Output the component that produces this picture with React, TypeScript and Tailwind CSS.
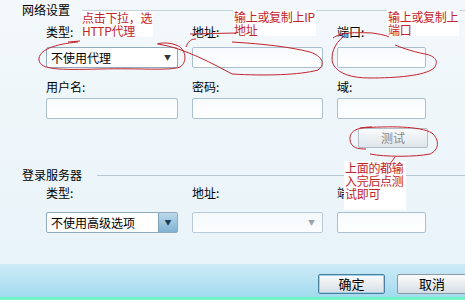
import React from "react";

const font = { fontFamily: '"SimSun", "Noto Sans CJK SC", "Liberation Sans", sans-serif' };

function Input({ className = "" }: { className?: string }) {
  return (
    <div
      className={`h-[21px] rounded-[2px] border border-[#aac0cf] bg-gradient-to-b from-[#f7fafc] to-white ${className}`}
    />
  );
}

function Label({ children }: { children: React.ReactNode }) {
  return <div className="h-[11px] text-[12px] leading-[11px] text-black">{children}</div>;
}

function Note({ lines, className }: { lines: string[]; className: string }) {
  return (
    <div
      className={`absolute whitespace-nowrap bg-white px-[1px] text-[12px] leading-[13px] tracking-[-0.3px] text-[#c3242c] ${className}`}
    >
      {lines.map((l) => (
        <div key={l}>{l}</div>
      ))}
    </div>
  );
}

export default function App() {
  return (
    <div
      className="relative flex h-[300px] w-[465px] flex-col overflow-hidden bg-gradient-to-b from-[#f3f8fb] to-[#e7f3f9]"
      style={font}
    >
      <div className="flex flex-1 flex-col pl-[46px] pt-[3px]">
        {/* 网络设置 */}
        <div className="-ml-[24px] flex h-[14px] items-center gap-[12px]">
          <span className="text-[12px] text-black">网络设置</span>
          <div className="h-px flex-1 bg-[#c5d3dc]" />
        </div>

        <div className="mt-[9px] grid grid-cols-[132px_131px_89px] gap-x-[14px]">
          <Label>类型:</Label>
          <Label>地址:</Label>
          <Label>端口:</Label>
          <div className="col-span-3 h-[10px]" />
          <div className="flex h-[21px] items-center justify-between rounded-[2px] border border-[#8fa9bd] bg-white pl-[4px] pr-[6px] text-[12px]">
            <span>不使用代理</span>
            <span className="text-[7px] text-[#333]">▼</span>
          </div>
          <Input />
          <Input />
          <div className="col-span-3 h-[13px]" />
          <Label>用户名:</Label>
          <Label>密码:</Label>
          <Label>域:</Label>
          <div className="col-span-3 h-[6px]" />
          <Input />
          <Input />
          <Input />
        </div>

        <div className="mt-[9px] flex pl-[312px]">
          <div className="flex h-[20px] w-[70px] items-center justify-center rounded-[2px] border border-[#b4bec6] bg-gradient-to-b from-[#fafbfc] to-[#dfe5ea] text-[12px] text-[#8a8a8a]">
            测试
          </div>
        </div>

        {/* 登录服务器 */}
        <div className="-ml-[24px] mt-[20px] flex h-[14px] items-center gap-[15px]">
          <span className="text-[12px] text-black">登录服务器</span>
          <div className="h-px flex-1 bg-[#b9c7d0]" />
        </div>

        <div className="mt-[5px] grid grid-cols-[132px_131px_89px] gap-x-[14px]">
          <Label>类型:</Label>
          <Label>地址:</Label>
          <Label>端口:</Label>
          <div className="col-span-3 h-[14px]" />
          <div className="flex h-[21px] items-stretch rounded-[2px] border border-[#8fa9bd] bg-white text-[12px]">
            <span className="flex flex-1 items-center pl-[4px]">不使用高级选项</span>
            <span className="flex w-[19px] items-center justify-center border-l border-[#7fa3bd] bg-gradient-to-b from-[#bcdaeb] to-[#7fb2d2] text-[7px] text-[#1d3c55]">
              ▼
            </span>
          </div>
          <div className="flex h-[21px] items-center justify-end rounded-[2px] border border-[#b8cad6] bg-gradient-to-b from-[#f5f9fb] to-[#fafcfd] pr-[7px] text-[7px] text-[#9aa4ab]">
            ▼
          </div>
          <Input />
        </div>
      </div>

      {/* bottom bar */}
      <div className="flex h-[36px] items-start justify-end gap-[12px] border-b-[3px] border-[#6ff4c6] bg-gradient-to-b from-[#cdeaf6] to-[#a2dbf0] pt-[10px]">
        <div className="flex h-[20px] w-[67px] items-center justify-center rounded-[2px] border border-[#4b7f9b] bg-gradient-to-b from-[#fbfcfd] to-[#d6dee4] text-[13px] text-black shadow-[inset_0_0_0_1px_#9fd0e8]">
          确定
        </div>
        <div className="-mr-[2px] flex h-[20px] w-[70px] items-center justify-center rounded-[2px] border border-[#8a9aa6] bg-gradient-to-b from-[#fbfcfd] to-[#d6dee4] text-[13px] text-black">
          取消
        </div>
      </div>

      {/* annotations */}
      <Note lines={["点击下拉，选", "HTTP代理"]} className="left-[81px] top-[11px]" />
      <Note lines={["输上或复制上IP", "地址"]} className="left-[233px] top-[10px]" />
      <Note lines={["输上或复制上", "端口"]} className="left-[387px] top-[10px]" />
      <Note lines={["上面的都输", "入完后点测", "试即可"]} className="left-[344px] top-[161px] h-[49px] w-[62px]" />

      <svg className="pointer-events-none absolute left-0 top-0" width="465" height="300" fill="none" stroke="#c3242c" strokeWidth="1">
        <path d="M68 42 L80 41" />
        <path d="M78 42 C55 44 38 50 39 60 C40 70 60 70 100 69 C140 68 170 71 180 67 C188 62 186 48 176 45 C168 42 160 43 157 44" />
        <path d="M158 44 C185 48 215 65 232 74 C265 76 300 75 318 70 C326 64 322 56 310 52 C290 47 265 44 232 42" />
        <path d="M186 47 C188 42 190 39 196 39" />
        <path d="M190 34 L236 33" />
        <path d="M333 38 C340 33 350 32 372 33 C380 34 388 36 389 37" />
        <path d="M344 36 C334 44 330 55 333 64 C338 74 352 78 370 78 C395 78 425 76 434 68 C439 62 436 56 425 54 C410 51 400 47 395 45" />
        <path d="M372 127 C356 127 349 132 350 140 C351 148 358 149 366 149" />
        <path d="M360 128 C390 126 420 126 432 133 C440 140 439 150 430 154 C415 157 385 157 370 154" />
        <path d="M395 157 C393 160 391 162 390 164" />
      </svg>
    </div>
  );
}
